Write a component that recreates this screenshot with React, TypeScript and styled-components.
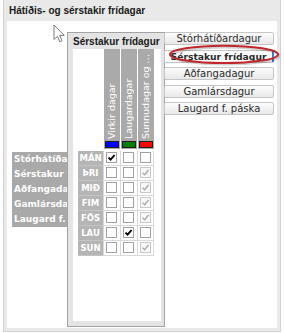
import styled, {createGlobalStyle} from 'styled-components'

type Mark = 'on' | 'off' | 'dis'

const holidays = ['Stórhátíðardagur', 'Sérstakur frídagur', 'Aðfangadagur', 'Gamlársdagur', 'Laugard f. páska']

const columns = [
    {label: 'Virkir dagar', color: '#0000ff'},
    {label: 'Laugardagar', color: '#008000'},
    {label: 'Sunnudagar og helgidagar', color: '#ff0000'},
]

const days: {name: string; marks: Mark[]}[] = [
    {name: 'MÁN', marks: ['on', 'off', 'off']},
    {name: 'ÞRI', marks: ['off', 'off', 'dis']},
    {name: 'MIÐ', marks: ['off', 'off', 'dis']},
    {name: 'FIM', marks: ['off', 'off', 'dis']},
    {name: 'FÖS', marks: ['off', 'off', 'dis']},
    {name: 'LAU', marks: ['off', 'on', 'off']},
    {name: 'SUN', marks: ['off', 'off', 'dis']},
]

const GlobalStyle = createGlobalStyle`
    html, body {
        margin: 0;
        padding: 0;
        background: #fff;
    }
    body {
        font-family: 'DejaVu Sans', sans-serif;
    }
`

const Check = ({mark}: {mark: Mark}) => (
    <Box disabled={mark === 'dis'}>
        {mark !== 'off' && (
            <svg width="9" height="9" viewBox="0 0 9 9">
                <path
                    d="M1.5 4.6 L3.6 6.7 L7.6 2"
                    fill="none"
                    stroke={mark === 'on' ? '#000' : '#a8a8a8'}
                    strokeWidth={mark === 'on' ? 1.9 : 1.3}
                />
            </svg>
        )}
    </Box>
)

export default function App() {
    return (
        <>
            <GlobalStyle />
            <Frame>
                <Title>Hátíðis- og sérstakir frídagar</Title>
                <Content>
                    <LabelList>
                        {holidays.map((h) => (
                            <LabelItem key={h}>{h}</LabelItem>
                        ))}
                    </LabelList>
                    <Panel>
                        <PanelTitle>Sérstakur frídagur</PanelTitle>
                        <PanelBody>
                            <HeaderRow>
                                <HeaderCorner />
                                {columns.map((c) => (
                                    <HeaderCol key={c.label}>
                                        <HeaderText>{c.label}</HeaderText>
                                        <Swatch color={c.color} />
                                    </HeaderCol>
                                ))}
                            </HeaderRow>
                            <DayGrid>
                                {days.map((d) => (
                                    <DayRow key={d.name}>
                                        <DayLabel>{d.name}</DayLabel>
                                        {d.marks.map((m, i) => (
                                            <Cell key={i}>
                                                <Check mark={m} />
                                            </Cell>
                                        ))}
                                    </DayRow>
                                ))}
                            </DayGrid>
                        </PanelBody>
                    </Panel>
                    <TabList>
                        {holidays.map((h, i) => (
                            <Tab key={h} active={i === 1}>
                                {h}
                            </Tab>
                        ))}
                    </TabList>
                </Content>
                <Cursor width="13" height="19" viewBox="0 0 13 19">
                    <path d="M1 1 L1 15.5 L4.4 12.3 L6.8 17.8 L9 16.8 L6.7 11.4 L11.2 11.4 Z" fill="#fff" stroke="#7a7a7a" strokeWidth="1" strokeLinejoin="round" />
                </Cursor>
                <Highlight width="116" height="24" viewBox="0 0 116 24">
                    <ellipse cx="58.5" cy="13" rx="54" ry="8.6" fill="none" stroke="rgba(0,0,0,0.18)" strokeWidth="2" />
                    <ellipse cx="57" cy="11.4" rx="54" ry="8.6" fill="none" stroke="#c0262b" strokeWidth="2" />
                </Highlight>
            </Frame>
        </>
    )
}

const Frame = styled.div`
    position: relative;
    box-sizing: border-box;
    margin-left: 3px;
    width: 278px;
    height: 332px;
    padding: 0 3px 3px 3px;
    background: #e9e9e9;
    border: 1px solid #d2d2d2;
    border-top: none;
    display: flex;
    flex-direction: column;
`

const Title = styled.div`
    height: 21px;
    line-height: 21px;
    padding-left: 2px;
    font-family: 'Liberation Sans', Arial, sans-serif;
    font-weight: bold;
    font-size: 10px;
    color: #1a1a1a;
`

const Content = styled.div`
    flex: 1;
    display: flex;
    align-items: flex-start;
    padding-left: 5px;
    background: #fff;
    overflow: hidden;
`

const LabelList = styled.div`
    width: 55px;
    margin-top: 131px;
    background: #a9a9a9;
    overflow: hidden;
    flex-shrink: 0;
`

const LabelItem = styled.div`
    height: 15px;
    line-height: 15px;
    padding-left: 2px;
    white-space: nowrap;
    color: #fff;
    font-weight: bold;
    font-size: 9px;
`

const Panel = styled.div`
    box-sizing: border-box;
    width: 98px;
    height: 295px;
    margin-top: 11px;
    padding: 0 3px 5px 5px;
    background: #e4e4e4;
    border: 1px solid #a3a3a3;
    display: flex;
    flex-direction: column;
    flex-shrink: 0;
`

const PanelTitle = styled.div`
    height: 16px;
    line-height: 17px;
    font-family: 'Liberation Sans', Arial, sans-serif;
    font-weight: bold;
    font-size: 10px;
    color: #1a1a1a;
    white-space: nowrap;
`

const PanelBody = styled.div`
    flex: 1;
    background: #fff;
    padding-left: 5px;
`

const HeaderRow = styled.div`
    display: flex;
    height: 100px;
`

const HeaderCorner = styled.div`
    width: 26px;
`

const HeaderCol = styled.div`
    box-sizing: border-box;
    width: 16px;
    margin-right: 1px;
    background: #aaaaaa;
    display: flex;
    flex-direction: column;
    align-items: center;
    padding-bottom: 1px;
`

const HeaderText = styled.div`
    flex: 1;
    min-height: 0;
    writing-mode: vertical-rl;
    transform: rotate(180deg);
    white-space: nowrap;
    overflow: hidden;
    text-overflow: ellipsis;
    color: #fff;
    font-size: 9.5px;
    line-height: 16px;
    padding-top: 2px;
    padding-bottom: 2px;
`

const Swatch = styled.div<{color: string}>`
    box-sizing: border-box;
    width: 14px;
    height: 7px;
    background: ${(p) => p.color};
    border: 1px solid #1d1d1d;
`

const DayGrid = styled.div`
    margin-top: 2px;
    display: flex;
    flex-direction: column;
`

const DayRow = styled.div`
    display: flex;
    height: 15px;
`

const DayLabel = styled.div`
    width: 25px;
    background: #b5b5b5;
    color: #fff;
    font-weight: bold;
    font-size: 8.5px;
    line-height: 15px;
    text-align: center;
    border-bottom: 1px solid #c4c4c4;
    box-sizing: border-box;
`

const Cell = styled.div`
    box-sizing: border-box;
    width: 17px;
    border-left: 1px solid #d9d9d9;
    border-bottom: 1px solid #d9d9d9;
    &:last-child {
        border-right: 1px solid #d9d9d9;
    }
    padding: 1px 0 0 2px;
`

const Box = styled.div<{disabled?: boolean}>`
    box-sizing: border-box;
    width: 11px;
    height: 11px;
    border: 1px solid ${(p) => (p.disabled ? '#c8c8c8' : '#a2a2a2')};
    background: ${(p) => (p.disabled ? '#f7f7f7' : '#fff')};
    display: flex;
    align-items: center;
    justify-content: center;
`

const TabList = styled.div`
    width: 110px;
    margin-left: -1px;
    margin-top: 11px;
    display: flex;
    flex-direction: column;
    gap: 4.5px;
`

const Tab = styled.div<{active?: boolean}>`
    box-sizing: border-box;
    height: 13px;
    line-height: 11px;
    text-align: center;
    white-space: nowrap;
    font-size: ${(p) => (p.active ? '9.2px' : '10px')};
    font-weight: ${(p) => (p.active ? 'bold' : 'normal')};
    color: #2b2b2b;
    background: ${(p) => (p.active ? '#fff' : 'linear-gradient(#fdfdfd, #e8e8e8)')};
    border: 1px solid #c6c6c6;
    border-right: ${(p) => (p.active ? '2px solid #3a7fdc' : '1px solid #c6c6c6')};
    border-radius: 2px;
`

const Cursor = styled.svg`
    position: absolute;
    left: 49px;
    top: 24px;
`

const Highlight = styled.svg`
    position: absolute;
    left: 163px;
    top: 43px;
`
